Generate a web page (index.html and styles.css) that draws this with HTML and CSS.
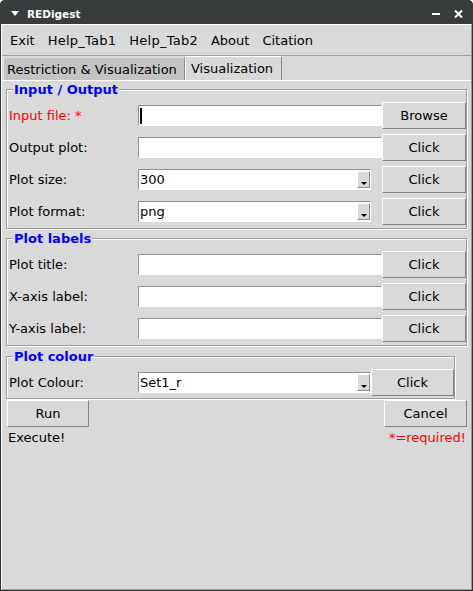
FILE: index.html
```html
<!DOCTYPE html>
<html>
<head>
<meta charset="utf-8">
<title>REDigest</title>
<link rel="stylesheet" href="styles.css">
</head>
<body>
<div class="window">
  <div class="titlebar">
    <svg class="tri" width="8" height="5" viewBox="0 0 8 5"><path d="M0 0H8L4 5Z" fill="#fff"/></svg>
    <span class="title">REDigest</span>
    <span class="spacer"></span>
    <svg class="min" width="8" height="2" viewBox="0 0 8 2"><rect width="8" height="2" fill="#fff"/></svg>
    <svg class="close" width="9" height="8" viewBox="0 0 9 8"><path d="M1 0.5L8 7.5M8 0.5L1 7.5" stroke="#fff" stroke-width="2"/></svg>
  </div>
  <div class="client">
    <nav class="menubar">
      <span class="menu">Exit</span>
      <span class="menu menu-wide">Help_Tab1</span>
      <span class="menu menu-wide">Help_Tab2</span>
      <span class="menu">About</span>
      <span class="menu">Citation</span>
    </nav>
    <div class="tabs">
      <div class="tab tab-first">Restriction &amp; Visualization</div>
      <div class="tab tab-active">Visualization</div>
    </div>
    <div class="panel">
      <fieldset class="group">
        <legend>Input / Output</legend>
        <div class="grid">
          <span class="label required">Input file: *</span>
          <div class="entry"><span class="cursor"></span></div>
          <button class="btn">Browse</button>

          <span class="label">Output plot:</span>
          <div class="entry"></div>
          <button class="btn">Click</button>

          <span class="label">Plot size:</span>
          <div class="entry combo"><span class="val">300</span><span class="arrow"><svg width="6" height="3" viewBox="0 0 6 3"><path d="M0 0H6L3 3Z" fill="#000"/></svg></span></div>
          <button class="btn">Click</button>

          <span class="label">Plot format:</span>
          <div class="entry combo"><span class="val">png</span><span class="arrow"><svg width="6" height="3" viewBox="0 0 6 3"><path d="M0 0H6L3 3Z" fill="#000"/></svg></span></div>
          <button class="btn">Click</button>
        </div>
      </fieldset>

      <fieldset class="group group-2">
        <legend>Plot labels</legend>
        <div class="grid">
          <span class="label">Plot title:</span>
          <div class="entry"></div>
          <button class="btn">Click</button>

          <span class="label">X-axis label:</span>
          <div class="entry"></div>
          <button class="btn">Click</button>

          <span class="label">Y-axis label:</span>
          <div class="entry"></div>
          <button class="btn">Click</button>
        </div>
      </fieldset>

      <fieldset class="group group-3">
        <legend>Plot colour</legend>
        <div class="grid grid-3">
          <span class="label">Plot Colour:</span>
          <div class="entry combo"><span class="val">Set1_r</span><span class="arrow"><svg width="6" height="3" viewBox="0 0 6 3"><path d="M0 0H6L3 3Z" fill="#000"/></svg></span></div>
          <button class="btn">Click</button>
        </div>
      </fieldset>

      <div class="actions">
        <button class="btn btn-run">Run</button>
        <button class="btn btn-cancel">Cancel</button>
      </div>
      <div class="status">
        <span>Execute!</span>
        <span class="req">*=required!</span>
      </div>
    </div>
  </div>
</div>
</body>
</html>
```
FILE: styles.css
```css
html, body {
  margin: 0;
  padding: 0;
  background: #ffffff;
}

body {
  font-family: "DejaVu Sans", sans-serif;
  font-size: 13px;
  line-height: 15px;
  color: #000000;
}

.window {
  width: 473px;
  height: 591px;
  box-sizing: border-box;
  background: #2f3333;
  border-radius: 5px 5px 0 0;
  display: flex;
  flex-direction: column;
  overflow: hidden;
}

.titlebar {
  height: 24px;
  flex: none;
  box-sizing: border-box;
  padding: 3px 0 0 11px;
  display: flex;
  align-items: center;
  background: #383c3c;
  color: #ffffff;
}

.tri {
  display: block;
  flex: none;
}

.title {
  margin-left: 8px;
  font-weight: bold;
  font-size: 10.5px;
  line-height: 12px;
}

.spacer {
  flex: 1;
}

.min {
  display: block;
  margin-right: 14px;
}

.close {
  display: block;
  margin-right: 10px;
}

.client {
  flex: 1;
  margin: 0 1px 1px 1px;
  background: #d9d9d9;
  border: 1px solid;
  border-color: #ffffff #9a9a9a #9a9a9a #ffffff;
  display: flex;
  flex-direction: column;
}

.menubar {
  height: 30px;
  flex: none;
  display: flex;
  align-items: center;
  padding-left: 1.5px;
  border-bottom: 1px solid #a0a0a0;
}

.menu {
  padding: 0 6.5px;
}

.menu-wide {
  letter-spacing: 0.25px;
}

.tabs {
  height: 25px;
  flex: none;
  display: flex;
  align-items: flex-start;
  margin-bottom: -1px;
}

.tab {
  box-sizing: border-box;
  display: flex;
  align-items: center;
  border-top: 1px solid #ffffff;
  border-left: 1px solid #ffffff;
  border-right: 1px solid #8c8c8c;
}

.tab-first {
  width: 182px;
  height: 23px;
  margin-top: 1px;
  margin-left: 1px;
  padding-left: 3px;
  background: #c3c3c3;
  border-top-color: #e0e0e0;
  border-left-color: #e6e6e6;
}

.tab-active {
  width: 97px;
  height: 25px;
  padding-left: 5px;
  padding-bottom: 1px;
  background: #d9d9d9;
  border-top-right-radius: 2px;
}

.panel {
  flex: 1;
  border-top: 1px solid #ffffff;
  padding: 1px 4px 0 4px;
}

.group {
  margin: 0;
  padding: 5px 0 3px 1px;
  width: 461px;
  box-sizing: border-box;
  min-width: 0;
  border: 1px solid #9d9d9d;
  box-shadow: inset 1px 1px 0 #ffffff, 1px 1px 0 #ffffff;
}

.group legend {
  margin-left: 5px;
  padding: 0 1px;
  font-weight: bold;
  color: #0000ff;
  line-height: 15px;
  background: #d9d9d9;
}

.group-2 {
  margin-top: 2px;
}

.group-3 {
  margin-top: 3px;
  width: fit-content;
  padding-bottom: 2px;
}

.grid {
  display: grid;
  grid-template-columns: 130px 244px 84px;
  grid-auto-rows: 27px;
  row-gap: 5px;
  align-items: center;
}

.grid-3 {
  grid-template-columns: 130px 233px 83px;
}

.label {
  padding-left: 1px;
  white-space: nowrap;
}

.required {
  color: #ff0000;
}

.entry {
  height: 21px;
  box-sizing: border-box;
  border: 1px solid;
  border-color: #8f8f8f #ffffff #ffffff #8f8f8f;
  background: #ffffff;
  padding-left: 1px;
  display: flex;
  align-items: center;
}

.cursor {
  display: block;
  width: 2px;
  height: 16px;
  background: #000000;
}

.combo {
  width: 233px;
}

.val {
  flex: 1;
}

.arrow {
  width: 13px;
  height: 17px;
  box-sizing: border-box;
  align-self: flex-end;
  margin-bottom: 1px;
  border: 1px solid;
  border-color: #ffffff #8a8a8a #8a8a8a #ffffff;
  background: #d9d9d9;
  display: flex;
  justify-content: center;
  align-items: flex-end;
  padding-bottom: 2px;
}

.arrow svg {
  display: block;
}

.btn {
  height: 27px;
  box-sizing: border-box;
  margin: 0;
  padding: 0;
  border: 1px solid;
  border-color: #ffffff #828282 #828282 #ffffff;
  background: #d9d9d9;
  font: inherit;
  line-height: 15px;
  color: #000000;
  text-align: center;
}

.grid .btn {
  width: 100%;
}

.actions {
  margin-top: 1px;
  padding-left: 1px;
  display: flex;
  justify-content: space-between;
}

.btn-run {
  width: 82px;
}

.btn-cancel {
  width: 83px;
}

.status {
  margin-top: 3px;
  padding: 0 1px 0 2px;
  display: flex;
  justify-content: space-between;
}

.req {
  color: #ff0000;
}
```
